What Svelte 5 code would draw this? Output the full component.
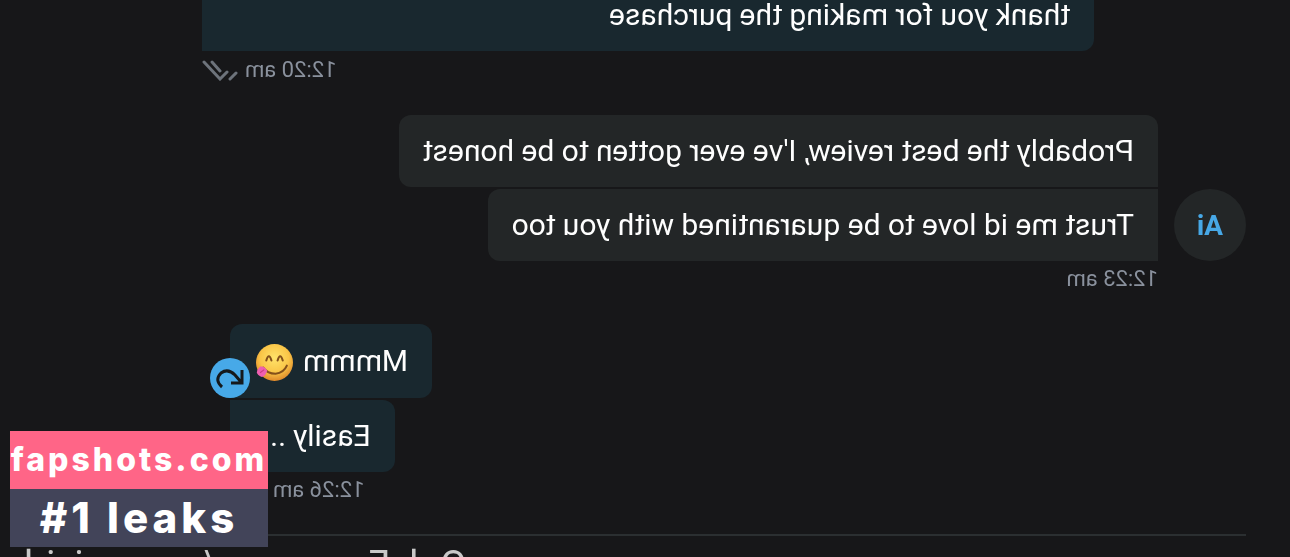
<script lang="ts">
	type Message = { text: string; emoji?: boolean };

	const sent: Message[] = [{ text: 'Mmmm', emoji: true }, { text: 'Easily ....' }];
	const received: Message[] = [
		{ text: "Probably the best review, I've ever gotten to be honest" },
		{ text: 'Trust me id love to be quarantined with you too' }
	];
</script>

{#snippet checks()}
	<svg class="checks" viewBox="0 0 36 22" aria-hidden="true">
		<path d="M2 14 L8 20 M11 13 L18 20 L34 3 M18 12 L26 3" />
	</svg>
{/snippet}

<div class="screen">
	<main class="chat">
		<section class="group own wide">
			<p class="bubble cut">thank you for making the purchase</p>
			<div class="meta"><time>12:20 am</time>{@render checks()}</div>
		</section>

		<section class="group received">
			<div class="avatar">Ai</div>
			<div class="stack">
				{#each received as message}
					<p class="bubble">{message.text}</p>
				{/each}
			</div>
			<div class="meta"><time>12:23 am</time></div>
		</section>

		<section class="group own">
			{#each sent as message}
				<div class="bubble">
					{message.text}
					{#if message.emoji}
						<svg class="emoji" viewBox="0 0 36 36" role="img" aria-label="Yum">
							<defs>
								<radialGradient id="face" cx="50%" cy="38%" r="64%">
									<stop offset="0" stop-color="#ffe36a" />
									<stop offset="0.6" stop-color="#fac648" />
									<stop offset="1" stop-color="#dd8327" />
								</radialGradient>
							</defs>
							<circle cx="18" cy="18" r="18" fill="url(#face)" />
							<path class="line" d="M10 16 Q12.5 8 15 16 M21 16 Q23.5 8 26 16" />
							<path class="line" d="M6 21 Q9 28 17 29 Q25 29 29 23" />
							<path
								d="M25 26 Q28 21 32 22 Q37 27 34 30 Q30 34 27 30Z"
								fill="#ee5fb0"
							/>
							<path d="M28 25 L32 28" stroke="#c93a82" fill="none" />
						</svg>
						<button class="resend" aria-label="Resend">
							<svg viewBox="0 0 40 40" aria-hidden="true">
								<path d="M8 12 V25 H19 M9 24 L15 17 Q22 10 29 15 Q36 22 28 29" />
							</svg>
						</button>
					{/if}
				</div>
			{/each}
			<div class="meta"><time>12:26 am</time>{@render checks()}</div>
		</section>
	</main>

	<footer>OnlyFans.com/amunaivid</footer>
</div>

<aside class="stamp">
	<div class="site">fapshots.com</div>
	<div class="tag">#1 leaks</div>
</aside>

<style>
	:global(body) {
		background: #171719;
	}

	/* the whole conversation is flipped, the stamp is not */
	.screen {
		height: 100vh;
		overflow: hidden;
		transform: scaleX(-1);
		font-family: Roboto, 'Liberation Sans', sans-serif;
		color: #fefefe;
	}

	.chat {
		margin: 0 44px;
		border-bottom: 2px solid #2b2f31;
	}

	.group {
		padding-bottom: 27px;
	}

	.own {
		display: flex;
		flex-direction: column;
		align-items: flex-end;
		gap: 2px;
		padding-right: 186px;
	}

	.own:last-child {
		padding-bottom: 26px;
	}

	.wide {
		gap: 0;
		padding-left: 152px;
		padding-right: 158px;
	}

	.received {
		display: grid;
		grid-template-columns: 72px 1fr;
		column-gap: 16px;
		align-items: end;
	}

	.stack {
		display: flex;
		flex-direction: column;
		align-items: flex-start;
		gap: 2px;
	}

	.bubble {
		position: relative;
		display: flex;
		align-items: center;
		gap: 10px;
		margin: 0;
		padding: 21px 24px;
		font-size: 30px;
		line-height: 30px;
		background: #232627;
		border-radius: 0 12px 12px 0;
		white-space: nowrap;
	}

	.stack .bubble:first-child {
		border-top-left-radius: 12px;
	}

	.own .bubble {
		background: #19282f;
		border-radius: 12px 0 0 12px;
	}

	.own .bubble:first-child {
		border-top-right-radius: 12px;
	}

	.wide .bubble.cut {
		align-self: stretch;
		padding-top: 0;
		margin-bottom: 1px;
		border-radius: 0 0 0 12px;
	}

	.meta {
		display: flex;
		align-items: center;
		gap: 7px;
		font-size: 22px;
		line-height: 36px;
		color: #8a919d;
	}

	.own:not(.wide) .meta {
		margin-top: -2px;
	}

	.received .meta {
		grid-column: 2;
	}

	.checks {
		width: 36px;
		height: 22px;
		fill: none;
		stroke: #6d737b;
		stroke-width: 3;
		stroke-linecap: round;
	}

	.avatar {
		display: grid;
		place-items: center;
		height: 72px;
		border-radius: 50%;
		background: #232627;
		color: #47a8e6;
		font-size: 28px;
		font-weight: 700;
	}

	.emoji {
		width: 37px;
		height: 37px;
		margin: -1px 2px -4px 0;
	}

	.emoji .line {
		fill: none;
		stroke: #84501a;
		stroke-width: 2;
		stroke-linecap: round;
	}

	.resend {
		position: absolute;
		right: -20px;
		bottom: 0;
		width: 40px;
		height: 40px;
		padding: 0;
		border: 0;
		border-radius: 50%;
		background: #47a9e8;
	}

	.resend svg {
		display: block;
		fill: none;
		stroke: #15191c;
		stroke-width: 3;
	}

	footer {
		padding: 6px 24px;
		font-size: 39px;
		line-height: 46px;
		text-align: right;
		color: #c8c8c8;
	}

	.stamp {
		position: absolute;
		left: 10px;
		bottom: 10px;
		width: 258px;
		font-family: Inter, 'Open Sans', sans-serif;
		font-weight: 800;
		text-align: center;
		white-space: nowrap;
		color: #fff;
	}

	.site {
		font-size: 32px;
		line-height: 58px;
		letter-spacing: 3px;
		background: #ff6587;
	}

	.tag {
		font-size: 42px;
		line-height: 58px;
		letter-spacing: 4px;
		background: #424459;
	}
</style>
